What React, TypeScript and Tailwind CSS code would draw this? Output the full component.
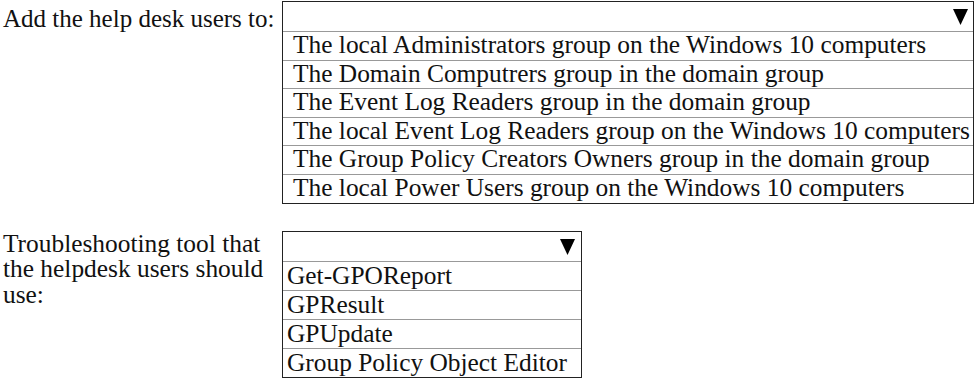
const groups = [
  "The local Administrators group on the Windows 10 computers",
  "The Domain Computrers group in the domain group",
  "The Event Log Readers group in the domain group",
  "The local Event Log Readers group on the Windows 10 computers",
  "The Group Policy Creators Owners group in the domain group",
  "The local Power Users group on the Windows 10 computers",
];

const tools = ["Get-GPOReport", "GPResult", "GPUpdate", "Group Policy Object Editor"];

function Arrow() {
  return (
    <svg width="15" height="17" viewBox="0 0 15 17" className="shrink-0">
      <polygon points="0,1 15,1 7.5,17" fill="#000" />
    </svg>
  );
}

export default function App() {
  return (
    <main className="w-[975px] h-[381px] bg-white text-[#111] text-[25.4px] leading-none font-['Liberation_Serif','Times_New_Roman',serif]">
      <section className="flex pt-px">
        <p className="w-[282px] pl-[3px] pt-[5px] text-[25px]">Add the help desk users to:</p>
        <div className="w-[692px] border border-[#222]">
          <div className="h-[29px] flex items-center justify-end pr-[5px]">
            <Arrow />
          </div>
          {groups.map((g) => (
            <div key={g} className="h-[28.6px] border-t border-[#999] pl-[10px] pb-[2px] flex items-center whitespace-nowrap">
              {g}
            </div>
          ))}
        </div>
      </section>

      <section className="flex mt-[27px]">
        <p className="w-[282px] pl-[3px] leading-[25.5px]">
          Troubleshooting tool that
          <br />
          the helpdesk users should
          <br />
          use:
        </p>
        <div className="w-[300px] border border-[#222]">
          <div className="h-[29px] flex items-center justify-end pr-[6px]">
            <Arrow />
          </div>
          {tools.map((t) => (
            <div key={t} className="h-[29px] border-t border-[#999] pl-[4px] flex items-center whitespace-nowrap">
              {t}
            </div>
          ))}
        </div>
      </section>
    </main>
  );
}
